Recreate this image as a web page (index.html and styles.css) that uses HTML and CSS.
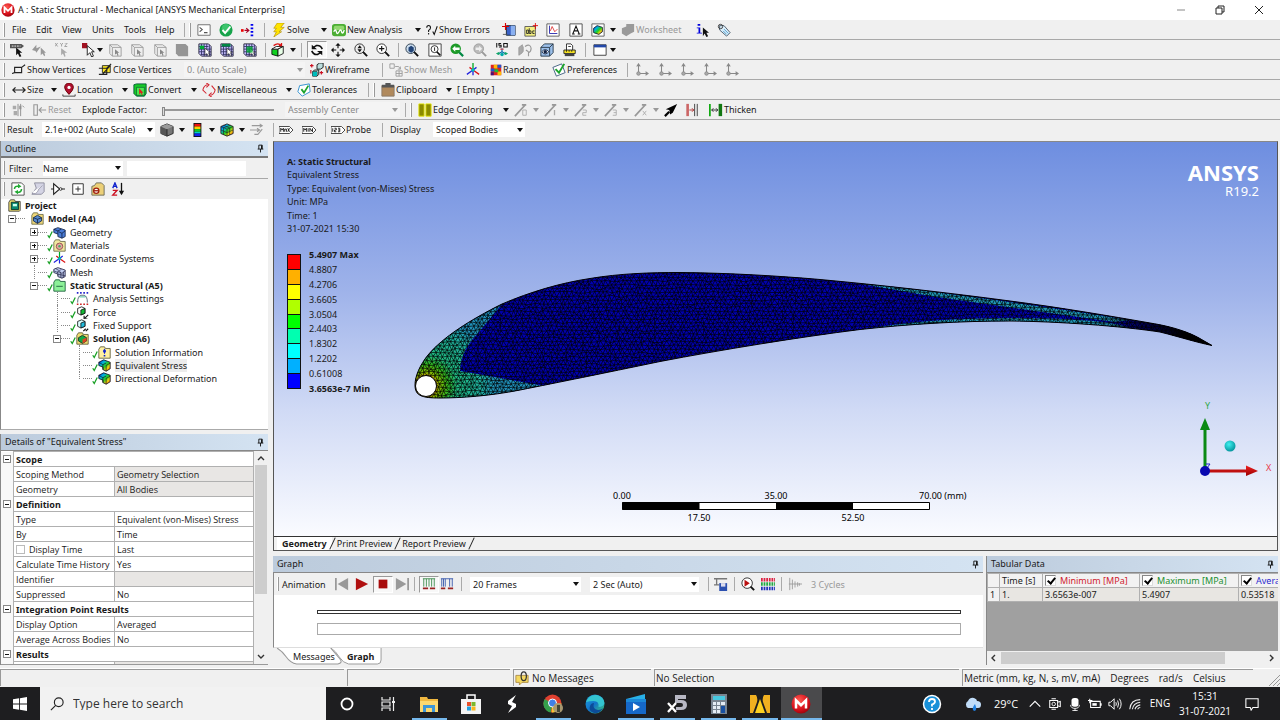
FILE: index.html
```html
<!DOCTYPE html>
<html lang="en">
<head>
<meta charset="utf-8">
<title>A : Static Structural - Mechanical [ANSYS Mechanical Enterprise]</title>
<link rel="stylesheet" href="styles.css">
</head>
<body>
<svg class="sprite" aria-hidden="true">
  <defs>
    <radialGradient id="ball" cx=".4" cy=".3" r=".8"><stop offset="0" stop-color="#ff5a50"/><stop offset=".6" stop-color="#d8101c"/><stop offset="1" stop-color="#8c0008"/></radialGradient>
    <linearGradient id="rain" x2="1" y2="1"><stop offset="0" stop-color="#0020d0"/><stop offset=".3" stop-color="#00b0e0"/><stop offset=".55" stop-color="#20d020"/><stop offset=".75" stop-color="#f0d010"/><stop offset="1" stop-color="#f03010"/></linearGradient>
    <linearGradient id="edgeg" x2="1" y2="1"><stop offset="0" stop-color="#1ba0e0"/><stop offset=".5" stop-color="#1272c8"/><stop offset="1" stop-color="#40d070"/></linearGradient>
  </defs>
  <symbol id="m-logo" viewBox="0 0 16 16"><circle cx="8" cy="8" r="7.6" fill="url(#ball)"/><path d="M4 11.500V5l4 4 4-4v6.500" fill="none" stroke="#fff" stroke-width="2"/></symbol>
  <symbol id="cmd" viewBox="0 0 16 16"><path d="M1 2h14v12H1z" fill="#fff" stroke="#666"/><path d="M3 5l3 2.500-3 2.500M8 11h4" fill="none" stroke="#555" stroke-width="1.200"/></symbol>
  <symbol id="okball" viewBox="0 0 16 16"><circle cx="8" cy="8" r="7.500" fill="#16a34a"/><circle cx="8" cy="6" r="5" fill="#3cc46c"/><path d="M4 8l3 3.500L13 4" fill="none" stroke="#fff" stroke-width="2.200"/></symbol>
  <symbol id="net" viewBox="0 0 16 16"><path d="M0 7h3v3H0z" fill="#e00"/><path d="M4 8.500h5M6 6l3 2.500L6 11" stroke="#a02" fill="none" stroke-width="1.300"/><path d="M11 1h3v2h-3zM11 5h3v2h-3zM11 9h3v2h-3zM11 13h3v2h-3z" fill="#00e"/></symbol>
  <symbol id="bolt" viewBox="0 0 16 16"><path d="M6 0h8l-4 5h4l-6 5h3l-9 6 3-6H2l3-4H2z" fill="#ffe400" stroke="#b08a00" stroke-width=".7"/></symbol>
  <symbol id="newan" viewBox="0 0 16 16"><rect y="1" width="16" height="14" rx="3" fill="#4cae34"/><rect x="2" y="3" width="12" height="5" rx="2" fill="#92d870"/><path d="M2 10q2-4 3 0t3 0 3 0 3-2" fill="none" stroke="#fff" stroke-width="1.500"/></symbol>
  <symbol id="errs" viewBox="0 0 16 16"><path d="M1 5q0-3 2.500-3T6 5q0 2-2.500 3.500v2M3.500 12v2M9 10l2 4 4-11" fill="none" stroke="#111" stroke-width="1.400"/></symbol>
  <symbol id="book" viewBox="0 0 16 16"><path d="M5 3h10v11H5z" fill="#3a62c8" stroke="#123"/><path d="M10 3h5v11h-5z" fill="#8ab0f0"/><path d="M4 0v8M0 4h8" stroke="#d00" stroke-width="1.300"/><path d="M1 13h5" stroke="#555"/></symbol>
  <symbol id="abc" viewBox="0 0 16 16"><path d="M1 4h12v11H1z" fill="#f4f080" stroke="#555"/><path d="M3 8h2v4H3zM6 6v6h2V9H6M12 9h-2v3h2" fill="none" stroke="#222"/><path d="M13 0v7M10 3h6" stroke="#d00"/></symbol>
  <symbol id="chart" viewBox="0 0 16 16"><path d="M1 1h14v14H1z" fill="#fff" stroke="#555"/><path d="M4 3v9h9" fill="none" stroke="#22a"/><path d="M5 9l2-5 3 6 3-3" fill="none" stroke="#d33"/></symbol>
  <symbol id="abox" viewBox="0 0 16 16"><path d="M1 1h14v14H1z" fill="#fff" stroke="#444"/><path d="M4.500 12L8 3.500l3.500 8.500M6 9h4M3.500 12.500h3M10 12.500h3" fill="none" stroke="#111" stroke-width="1.200"/></symbol>
  <symbol id="rainbox" viewBox="0 0 16 16"><path d="M1 1h14v14H1z" fill="#fff" stroke="#555"/><path d="M3 6l4-3 6 2v5l-4 3-6-2z" fill="url(#rain)" stroke="#123"/></symbol>
  <symbol id="wsheet" viewBox="0 0 16 16"><path d="M6 1h9v9l-4 2-5 3-5-3V6l5-2z" fill="#9a9a9a"/></symbol>
  <symbol id="icur" viewBox="0 0 16 16"><path d="M3 1h3v2H3zM2 5h4v6h2v1H2v-1h2V6H2z" fill="#00d"/><path d="M9 5v10l2-3 2 4 2-1-2-4h3z" fill="#111"/></symbol>
  <symbol id="tag" viewBox="0 0 16 16"><path d="M3 3l5 0 7 8-4 4-8-7z" fill="#dceefa" stroke="#456"/><circle cx="4" cy="4" r="2.500" fill="none" stroke="#333"/><path d="M8 7l5 5M7 9l4 4" stroke="#49c"/></symbol>
  <symbol id="lblsel" viewBox="0 0 16 16"><path d="M0 1h13l3 2.500L13 6H0z" fill="#555"/><path d="M2 3.500h10" stroke="#fff" stroke-dasharray="2 1"/><path d="M7 5v9l2-2 2 4 2-1-2-4h3z" fill="#111"/></symbol>
  <symbol id="graysel" viewBox="0 0 16 16"><path d="M0 8l5-6v4l5-2-5 7-1-2z" fill="#999"/><path d="M10 5v9l2-2 2 3 1-1-1-3h2z" fill="#999"/></symbol>
  <symbol id="xyz" viewBox="0 0 16 16"><path d="M0 0l3 4M3 0L0 4M6 0l1.500 2L9 0M7.500 2v2M11 0h3l-3 4h3" fill="none" stroke="#999"/><path d="M7 6v8l2-2 2 4 1-1-1-4h3z" fill="#aaa"/></symbol>
  <symbol id="cursor" viewBox="0 0 16 16"><path d="M0 0h6v6H0z" fill="#a01020"/><path d="M6 3v11l3-3 2 5 2-1-2-5h3z" fill="#fff" stroke="#111"/></symbol>
  <symbol id="cubeg" viewBox="0 0 16 16"><path d="M2 2h9l4 3v10H5l-3-3zM2 2l3 3h10M5 5v10" fill="#eee" stroke="#999"/><path d="M8 7v6l2-1 1 3 1-1-1-3h2z" fill="#888"/></symbol>
  <symbol id="cubes" viewBox="0 0 16 16"><path d="M1 1h11l3 3v11H4l-3-3z" fill="#959595"/></symbol>
  <symbol id="cubem" viewBox="0 0 16 16"><path d="M1 1h11l3 3v11H4l-3-3z" fill="#c8c0ff" stroke="#223"/><path d="M1 4h11M1 7h14M1 10h14M3 13h12M4 1v13M7 1v14M10 1v14M13 2v13" stroke="#336"/><path d="M8 6v8l2-2 2 3 1-1-1-3h2z" fill="#fff" stroke="#111" stroke-width=".6"/></symbol>
  <symbol id="cubem1" viewBox="0 0 16 16"><use href="#cubem"/><path d="M2 3h5v4H2z" fill="#0a3"/></symbol>
  <symbol id="cubem2" viewBox="0 0 16 16"><use href="#cubem"/><path d="M2 1h10v3H2z" fill="#084"/></symbol>
  <symbol id="cubem3" viewBox="0 0 16 16"><use href="#cubem"/><path d="M4 4h7v7H4z" fill="#0a3" fill-opacity=".8"/></symbol>
  <symbol id="cuber" viewBox="0 0 16 16"><path d="M1 7h7v8l-7-2z" fill="#10d020" stroke="#111"/><path d="M1 7l5-3h8l-6 3z" fill="#fff" stroke="#111"/><path d="M8 7l6-3v8l-6 3z" fill="#e8ffe8" stroke="#111"/><path d="M3 3q5-4 9 0M12 0v3H9" fill="none" stroke="#d11" stroke-width="1.500"/></symbol>
  <symbol id="rot" viewBox="0 0 16 16"><path d="M14 7Q12 2 7 3L4 5M2 9q2 5 7 4l3-2" fill="none" stroke="#111" stroke-width="1.800"/><path d="M2 2v5h6zM14 14V9H8z" fill="#111"/></symbol>
  <symbol id="pan" viewBox="0 0 16 16"><path d="M8 2v4M8 10v4M2 8h4M10 8h4" stroke="#111" stroke-width="1.300"/><path d="M8 0l3 3H5zM8 16l3-3H5zM0 8l3-3v6zM16 8l-3-3v6z" fill="#111"/></symbol>
  <symbol id="zoom1" viewBox="0 0 16 16"><circle cx="6.500" cy="6.500" r="5.500" fill="#eee" stroke="#222"/><path d="M10.500 10.500L15 15" stroke="#111" stroke-width="2.200"/><path d="M6.500 2.500L9 6H4zM6.500 10.500L4 7h5z" fill="#111"/></symbol>
  <symbol id="zoom2" viewBox="0 0 16 16"><circle cx="6.500" cy="6.500" r="5.500" fill="#fff" stroke="#222"/><path d="M10.500 10.500L15 15" stroke="#111" stroke-width="2.200"/><path d="M3.500 6.500h6M6.500 3.500v6" stroke="#111" stroke-width="1.300"/></symbol>
  <symbol id="zoom3" viewBox="0 0 16 16"><circle cx="6.500" cy="6.500" r="5.500" fill="#cde" stroke="#234"/><path d="M10.500 10.500L15 15" stroke="#111" stroke-width="2.200"/><path d="M4 5l3-2 3 2v4l-3 2-3-2z" fill="#247"/></symbol>
  <symbol id="zoom4" viewBox="0 0 16 16"><path d="M1 1h14v14H1z" fill="#fff" stroke="#333"/><circle cx="7.500" cy="7" r="4" fill="none" stroke="#222"/><path d="M10 10l4 4" stroke="#111" stroke-width="2"/><path d="M7.500 5v4" stroke="#111"/></symbol>
  <symbol id="zoomg" viewBox="0 0 16 16"><circle cx="6.500" cy="6.500" r="6" fill="#1c9a28"/><path d="M10.500 10.500L15 15" stroke="#084" stroke-width="2.500"/><path d="M6 3L2.500 6.500 6 10V8h5V5H6z" fill="#fff"/></symbol>
  <symbol id="zoomx" viewBox="0 0 16 16"><circle cx="6.500" cy="6.500" r="5.500" fill="#bbb" stroke="#999"/><path d="M10.500 10.500L15 15" stroke="#999" stroke-width="2.200"/><path d="M7 3l3.500 3.500L7 10V8H3V5h4z" fill="#eee"/></symbol>
  <symbol id="iso" viewBox="0 0 16 16"><path d="M2 0v5M7 .500H4.500v2H7v2H4.500M10 .500h4v4h-4z" fill="none" stroke="#111" stroke-width="1.200"/><path d="M8 6v4l-5 3M8 10l5 3" fill="none" stroke="#06a" stroke-width="1.300"/><path d="M1 12l4-2v4zM15 12l-4-2v4z" fill="#1a6"/><circle cx="8" cy="13" r="2" fill="#0aa"/><path d="M6 7h4" stroke="#d22"/></symbol>
  <symbol id="lookat" viewBox="0 0 16 16"><path d="M1 5l4-3v9l-4 3zM6 4v6" fill="#aaa" stroke="#999"/><path d="M8 4q6-4 7 2 0 4-3 5v4M9 8l3 2" fill="none" stroke="#999" stroke-width="1.300"/></symbol>
  <symbol id="eye" viewBox="0 0 16 16"><path d="M1 5l4-4h10v10l-4 4H1zM1 5h10v10M11 5l4-4" fill="#9cc0ea" stroke="#234"/><path d="M2 10q4-5 8 0-4 5-8 0z" fill="#fff" stroke="#124"/><circle cx="6" cy="10" r="2" fill="#124"/></symbol>
  <symbol id="ruler" viewBox="0 0 16 16"><path d="M4 8V1h5l2 2v5M6 4h3" fill="#fff" stroke="#222"/><path d="M1 8h13v4H1z" fill="#f4e020" stroke="#222"/><path d="M2 12h11v3H2z" fill="#444"/><path d="M4 8v2M7 8v2M10 8v2" stroke="#222"/></symbol>
  <symbol id="win" viewBox="0 0 16 16"><path d="M1 2h14v12H1z" fill="#fff" stroke="#333"/><path d="M1 2h14v3H1z" fill="#2348a8"/></symbol>
  <symbol id="sv" viewBox="0 0 16 16"><path d="M3 5h8v6H3zM0 12l3-1M11 5l4-3" fill="none" stroke="#222" stroke-width="1.300"/></symbol>
  <symbol id="cv" viewBox="0 0 16 16"><path d="M5 3h9v8H5z" fill="#ffe820" stroke="#222"/><path d="M1 6h9v7H1M10 6l5-5M5 13L14 3" fill="none" stroke="#222" stroke-width="1.300"/></symbol>
  <symbol id="wire" viewBox="0 0 16 16"><path d="M8 2l3-2h4v5l-3 2H8zM3 10h5v5H3zM3 10l2-2h5v5l-2 2" fill="#bdd" stroke="#111"/><path d="M3 10h5v5H3z" fill="#0bb"/><path d="M0 3h4M2 1v4M1 8v4M13 9v4M11 11h4" stroke="#c12" stroke-width="1.300"/></symbol>
  <symbol id="smesh" viewBox="0 0 16 16"><path d="M1 1h5v5H1zM8 9h7v6H8zM8 12h7M11.500 9v6M7 4h4l2 3M13 4v3h-3" fill="none" stroke="#999"/></symbol>
  <symbol id="triad" viewBox="0 0 16 16"><path d="M8 8V0" stroke="#0a2" stroke-width="1.500"/><path d="M8 8l7 5M4 5l4 3" stroke="#d11" stroke-width="1.500"/><path d="M8 8l-7 5M8 8l4-3M8 8v6" stroke="#22d" stroke-width="1.500"/><circle cx="8" cy="8" r="2" fill="#0bb"/></symbol>
  <symbol id="random" viewBox="0 0 16 16"><path d="M1 1h14v14H1z" fill="#d22"/><path d="M5 1h5v5H5zM10 10h5v5h-5z" fill="#fb0"/><path d="M1 6h5v4H1zM10 1h5v4h-5z" fill="#25c"/><path d="M6 7h5v4H6z" fill="#2b3"/><path d="M1 11h4v4H1z" fill="#417"/></symbol>
  <symbol id="pref" viewBox="0 0 16 16"><path d="M1 5L11 1l4 10-10 4z" fill="#fff" stroke="#357"/><path d="M4 7l4 4L14 1" fill="none" stroke="#1ca42c" stroke-width="2.200"/></symbol>
  <symbol id="axis" viewBox="0 0 16 16"><path d="M4 12V2M2 4l2-3 2 3M4 12h11M12 10l3 2-3 2" fill="none" stroke="#888" stroke-width="1.200"/><circle cx="4" cy="12" r="2" fill="#aaa" stroke="#888"/></symbol>
  <symbol id="size" viewBox="0 0 16 16"><path d="M1 8h14M4 5L1 8l3 3M12 5l3 3-3 3" fill="none" stroke="#222" stroke-width="1.400"/></symbol>
  <symbol id="loc" viewBox="0 0 16 16"><path d="M8 13Q3 8 3 5a5 5 0 0110 0q0 3-5 8z" fill="#b01030" stroke="#600"/><circle cx="8" cy="5" r="1.800" fill="#fff"/><path d="M1 13v2h14v-2" fill="none" stroke="#333"/></symbol>
  <symbol id="conv" viewBox="0 0 16 16"><path d="M1 2l3-1h11v11l-2 3H4l-3-3z" fill="#18c828" stroke="#053"/><path d="M4 5h9v9H4z" fill="#4ce850" stroke="#053" stroke-width=".7"/><path d="M7 6v7l2-2 1 3 1-1-1-2h2z" fill="#d22"/></symbol>
  <symbol id="misc" viewBox="0 0 16 16"><path d="M6 2Q2 3 1 8l4 4M10 14q4-1 5-6l-4-5M5 5L8 2 5 0M11 11l-3 3 3 2" fill="none" stroke="#d2232e" stroke-width="1.200"/></symbol>
  <symbol id="tol" viewBox="0 0 16 16"><path d="M3 3L14 1l1 9-9 5-5-5z" fill="#fff" stroke="#28c"/><path d="M5 7l3 4 5-8" fill="none" stroke="#1ca42c" stroke-width="2"/></symbol>
  <symbol id="clip" viewBox="0 0 16 16"><path d="M1 3h14v12H1z" fill="#b0895c" stroke="#876"/><path d="M1 2h14v3H1zM5 0h6v3H5z" fill="#555"/></symbol>
  <symbol id="expl" viewBox="0 0 16 16"><path d="M2 3h4v4H2zM3 9h4v5H3zM9 3h3v4H9z" fill="#aaa"/><path d="M8 1v14M11 1v14M13 3l2 2" stroke="#888"/></symbol>
  <symbol id="reset" viewBox="0 0 16 16"><path d="M1 2h4v12H1zM7 8h8M10 5L7 8l3 3" fill="none" stroke="#999" stroke-width="1.300"/></symbol>
  <symbol id="edgec" viewBox="0 0 16 16"><path d="M1 1h6v14H1zM9 1h6v14H9z" fill="#8a8a00" stroke="#e6e600"/></symbol>
  <symbol id="edgen" viewBox="0 0 16 16"><path d="M1 15L13 2M9 2h5" stroke="#999" stroke-width="2"/><path d="M10 8h4v6h-4z" fill="none" stroke="#aaa"/></symbol>
  <symbol id="edge1" viewBox="0 0 16 16"><path d="M1 15L13 2M9 2h5" stroke="#999" stroke-width="2"/><path d="M12 8v6" stroke="#aaa" stroke-width="1.500"/></symbol>
  <symbol id="edge2" viewBox="0 0 16 16"><path d="M1 15L13 2M9 2h5" stroke="#999" stroke-width="2"/><path d="M10 8h4v3h-4v3h4" fill="none" stroke="#aaa"/></symbol>
  <symbol id="edge3" viewBox="0 0 16 16"><path d="M1 15L13 2M9 2h5" stroke="#999" stroke-width="2"/><path d="M10 8h4v6h-4M11 11h3" fill="none" stroke="#aaa"/></symbol>
  <symbol id="edgex" viewBox="0 0 16 16"><path d="M1 15L13 2M9 2h5" stroke="#999" stroke-width="2"/><path d="M10 9l4 5M14 9l-4 5" fill="none" stroke="#aaa"/></symbol>
  <symbol id="darrow" viewBox="0 0 16 16"><path d="M1 15l5-5" stroke="#000" stroke-width="2.500"/><path d="M15 1L2 7l4 1 1 5 3-2z" fill="#000"/></symbol>
  <symbol id="ticks" viewBox="0 0 16 16"><path d="M3 1v14" stroke="#c66" stroke-width="3"/><path d="M14 1v14M11 1v14" stroke="#333"/><path d="M5 8h5M8 6l2 2-2 2" fill="none" stroke="#a22"/></symbol>
  <symbol id="thick" viewBox="0 0 16 16"><path d="M1 1v14" stroke="#1a1" stroke-width="2"/><path d="M13 1v14" stroke="#171" stroke-width="4"/><path d="M3 8h7M5 6L3 8l2 2M8 6l2 2-2 2" fill="none" stroke="#222"/></symbol>
  <symbol id="solid" viewBox="0 0 16 16"><path d="M1 4l7-3 7 3v8l-7 3-7-3z" fill="#777" stroke="#222"/><path d="M1 4l7 3v8l-7-3z" fill="#555"/><path d="M1 4l7-3 7 3-7 3z" fill="#999"/><path d="M8 7v8" stroke="#222"/></symbol>
  <symbol id="strip" viewBox="0 0 16 16"><path d="M4 0h9v16H4z" fill="#111"/><path d="M5 1h7v3H5z" fill="#e11"/><path d="M5 4h7v3H5z" fill="#fc0"/><path d="M5 7h7v3H5z" fill="#1c2"/><path d="M5 10h7v2H5z" fill="#0cc"/><path d="M5 12h7v3H5z" fill="#12e"/></symbol>
  <symbol id="rcube" viewBox="0 0 16 16"><path d="M1 4l7-3 7 3v8l-7 3-7-3z" fill="url(#rain)" stroke="#222"/><path d="M1 4l7 3v8M8 7l7-3M4 2.500l7 3.200v8M12 2.500L4 5.500v8M1 8l7 3 7-3" fill="none" stroke="#222" stroke-width=".7"/></symbol>
  <symbol id="vecs" viewBox="0 0 16 16"><path d="M2 3h12M11 1l3 2-3 2M0 8h10M8 6l3 2-3 2M5 13h4l5-6" fill="none" stroke="#999" stroke-width="1.200"/></symbol>
  <symbol id="max" viewBox="0 0 16 16"><path d="M0 4h12l4 4-4 4H0z" fill="#fff" stroke="#333"/><path d="M2 10V6l1.500 2L5 6v4M6.500 10V7h2v3M10 6l2 4M12 6l-2 4" fill="none" stroke="#111"/></symbol>
  <symbol id="min" viewBox="0 0 16 16"><path d="M0 4h12l4 4-4 4H0z" fill="#fff" stroke="#333"/><path d="M2 10V6l1.500 2L5 6v4M7 6v4M9 10V6l3 4V6" fill="none" stroke="#111"/></symbol>
  <symbol id="probe" viewBox="0 0 16 16"><path d="M0 4h12l4 4-4 4H0z" fill="#fff" stroke="#333"/><path d="M2 6v4M4 6h2v2H4v2h2M8 6h2v4H8M8 8h2" fill="none" stroke="#111"/></symbol>
  <symbol id="pin" viewBox="0 0 16 16"><path d="M5 2h6v7M5 2v7M3 9h10M8 9v6" fill="none" stroke="#111" stroke-width="1.600"/><path d="M9 2h2v7H9z" fill="#111"/></symbol>
  <symbol id="refresh" viewBox="0 0 16 16"><path d="M1 1h11l3 3v11H1z" fill="#fff" stroke="#444"/><path d="M4 8q0-4 5-3M12 8q0 4-5 4" fill="none" stroke="#2a3" stroke-width="1.800"/><path d="M8 2l4 3-4 2zM8 14l-4-3 4-2z" fill="#2a3"/></symbol>
  <symbol id="erase" viewBox="0 0 16 16"><path d="M4 1h11v10l-3 3H1l5-7z" fill="#d4d4e4" stroke="#889"/><path d="M1 12q5 4 8-4l4-4" fill="#fff" stroke="#99a"/></symbol>
  <symbol id="gate" viewBox="0 0 16 16"><path d="M3 2v12l7-6zM0 8h3M10 8h6" fill="#fff" stroke="#222" stroke-width="1.200"/><circle cx="11" cy="8" r="1.500" fill="#fff" stroke="#222"/></symbol>
  <symbol id="plusbox" viewBox="0 0 16 16"><path d="M2 2h12v12H2zM5 8h6M8 5v6" fill="#fff" stroke="#222"/></symbol>
  <symbol id="fold" viewBox="0 0 16 16"><path d="M1 5l3-1 2-3h6l3 3v11H1z" fill="#ecd078" stroke="#665"/><circle cx="6" cy="10" r="3" fill="#fff" stroke="#a02010" stroke-width="1.500"/><path d="M3 10h6" stroke="#a02010" stroke-width="1.500"/></symbol>
  <symbol id="az" viewBox="0 0 16 16"><path d="M2 7l2.500-6L7 7M3 5h3" fill="none" stroke="#12c" stroke-width="1.500"/><path d="M2 9.500h5L2 15h5" fill="none" stroke="#c12" stroke-width="1.500"/><path d="M12 1v12" stroke="#111" stroke-width="1.500"/><path d="M9 10l3 5 3-5z" fill="#111"/></symbol>
  <symbol id="proj" viewBox="0 0 16 16"><path d="M1 4l2-3h5l1 2h6v11l-1 1H1z" fill="#f0e070" stroke="#333"/><path d="M4 4h9v9H4z" fill="#0a8a70" stroke="#022"/><path d="M6 6h5v3H6z" fill="#cfe"/></symbol>
  <symbol id="model" viewBox="0 0 16 16"><path d="M1 4l2-3h5l1 2h6v12H1z" fill="#f0d878" stroke="#664"/><path d="M3 7l5-3 5 3v4l-5 3-5-3z" fill="#58c" stroke="#124"/><path d="M3 7l5 2 5-2M8 9v5" stroke="#124" fill="none"/></symbol>
  <symbol id="geom" viewBox="0 0 16 16"><path d="M1 4l5-2 9 3v8l-4 2-5-2v-3l-5-2z" fill="#4a7cd8" stroke="#124"/><path d="M1 4l5 2 4-2M6 6v4M7 7l4 2 4-3M11 9v6" fill="none" stroke="#124"/></symbol>
  <symbol id="mat" viewBox="0 0 16 16"><path d="M1 4l2-3h5l1 2h6v12H1z" fill="#f0e8a0" stroke="#664"/><circle cx="8" cy="9" r="4" fill="#e8a8a0" stroke="#844"/><circle cx="8" cy="9" r="1.500" fill="#4a6"/></symbol>
  <symbol id="mesh" viewBox="0 0 16 16"><path d="M1 4l5-2 9 3v8l-4 2-5-2v-3l-5-2z" fill="#c0ccf0" stroke="#224"/><path d="M1 6l5 2 4-4M3 3l5 3M6 6v6M7 7l4 2 4-3M11 9v6M9 7v7M13 7v7M6 10l9 2" fill="none" stroke="#224" stroke-width=".8"/></symbol>
  <symbol id="statics" viewBox="0 0 16 16"><path d="M1 4l2-3h5l1 2h6v12H1z" fill="#8cf098" stroke="#153"/><path d="M4 9h8" stroke="#153"/></symbol>
  <symbol id="aset" viewBox="0 0 16 16"><path d="M1 1h14" stroke="#22c" stroke-width="2" stroke-dasharray="2 2"/><path d="M1 15h14" stroke="#c22" stroke-width="2" stroke-dasharray="2 2"/><path d="M2 13q0-8 4-9h4q4 1 4 9" fill="none" stroke="#456"/><path d="M4 6h8" stroke="#2a8"/></symbol>
  <symbol id="force" viewBox="0 0 16 16"><path d="M2 3l5-2 4 2v6l-5 2-4-2z" fill="#fff" stroke="#111"/><path d="M6 5l5-2v6l-5 2z" fill="#1b3" stroke="#111"/><path d="M15 11l-4 4M10 12v4h4" fill="none" stroke="#111" stroke-width="1.400"/></symbol>
  <symbol id="fixed" viewBox="0 0 16 16"><path d="M2 3l5-2 4 2v6l-5 2-4-2z" fill="#dff" stroke="#111"/><path d="M6 5l5-2v6l-5 2z" fill="#2bd" stroke="#111"/><path d="M9 15l3-3M12 15l3-3" stroke="#111" stroke-width="1.400"/></symbol>
  <symbol id="soln" viewBox="0 0 16 16"><path d="M1 4l2-3h5l1 2h6v12H1z" fill="#f0dc70" stroke="#553"/><path d="M3 7l5-3 5 3v4l-5 3-5-3z" fill="#1a4" stroke="#122"/><path d="M8 9l5-2v4l-5 3z" fill="#d42"/></symbol>
  <symbol id="sinfo" viewBox="0 0 16 16"><path d="M1 4l2-3h5l1 2h6v12H1z" fill="#fff0a0" stroke="#553"/><path d="M8 3l2 3-2 4-2-4zM7 11h2v2H7z" fill="#12c"/></symbol>
  <symbol id="result" viewBox="0 0 16 16"><path d="M1 4l6-3 8 3v8l-5 3-4-2v-3l-5-2z" fill="url(#rain)" stroke="#112"/><path d="M1 4l5 3v6M6 7l4-2M10 8v7M10 8l5-3" fill="none" stroke="#112" stroke-width=".8"/></symbol>
  <symbol id="check" viewBox="0 0 8 10"><path d="M1 6l2 3 4-8" fill="none" stroke="#18a024" stroke-width="1.700"/></symbol>
  <symbol id="tstart" viewBox="0 0 16 16"><path d="M1 1v14" stroke="#999" stroke-width="2"/><path d="M15 1v14L3 8z" fill="#999"/></symbol>
  <symbol id="tplay" viewBox="0 0 16 16"><path d="M1 1l14 7-14 7z" fill="#b01010"/></symbol>
  <symbol id="tstop" viewBox="0 0 16 16"><path d="M3 3h10v10H3z" fill="#a80c0c"/></symbol>
  <symbol id="tend" viewBox="0 0 16 16"><path d="M15 1v14" stroke="#999" stroke-width="2"/><path d="M1 1v14l12-7z" fill="#999"/></symbol>
  <symbol id="dist1" viewBox="0 0 16 16"><path d="M1 2h14M2 2v9M5 2v9M8 2v9M11 2v9M14 2v9" stroke="#3a8a4a" fill="none"/><path d="M1 13h6M9 13h6" stroke="#922" stroke-width="2"/></symbol>
  <symbol id="dist2" viewBox="0 0 16 16"><path d="M1 2h14M2 2v9M4 2v9M6 2v9M11 2v9M14 2v9" stroke="#35a" fill="none"/><path d="M1 13h5M9 13h6" stroke="#922" stroke-width="2"/></symbol>
  <symbol id="save" viewBox="0 0 16 16"><path d="M0 2h15M3 2v7M0 9h6" stroke="#777" stroke-width="1.500"/><path d="M6 7h9v9H6z" fill="#2c50b0"/><path d="M8 7h5v4H8z" fill="#dde"/></symbol>
  <symbol id="zplay" viewBox="0 0 16 16"><circle cx="7" cy="7" r="6" fill="#fff" stroke="#222"/><path d="M11 11l4 4" stroke="#111" stroke-width="2.200"/><path d="M4 3l6 4-6 4z" fill="#b11"/></symbol>
  <symbol id="bars" viewBox="0 0 16 16"><path d="M0 3h16" stroke="#d24" stroke-width="4" stroke-dasharray="2 1"/><path d="M0 8h16" stroke="#2a4" stroke-width="4" stroke-dasharray="2 1"/><path d="M0 13h16" stroke="#23b" stroke-width="4" stroke-dasharray="2 1"/></symbol>
  <symbol id="cyc" viewBox="0 0 16 16"><path d="M2 1v14M5 3v11M8 5v7M11 6v5M13 7v3M1 8h15" stroke="#999" fill="none"/></symbol>
  <symbol id="msg" viewBox="0 0 16 16"><path d="M1 5h14v8H8l-3 3v-3H1z" fill="#f4d860" stroke="#a84"/><ellipse cx="10" cy="6" rx="3" ry="5" fill="none" stroke="#333" stroke-width="1.400"/></symbol>
  <symbol id="winlogo" viewBox="0 0 16 16"><path d="M0 2.500l7-1v6H0zM8 1.300L16 0v7.500H8zM0 8.500h7v6l-7-1zM8 8.500h8V16l-8-1.300z" fill="#fff"/></symbol>
  <symbol id="search" viewBox="0 0 16 16"><circle cx="10" cy="6" r="5" fill="none" stroke="#222" stroke-width="1.300"/><path d="M6.500 9.500L1 15" stroke="#222" stroke-width="1.300"/></symbol>
  <symbol id="cortana" viewBox="0 0 20 20"><circle cx="10" cy="10" r="5.500" fill="none" stroke="#fff" stroke-width="1.800"/></symbol>
  <symbol id="tview" viewBox="0 0 20 20"><path d="M4 3v3h8V3M4 17v-3h8v3M4 8h8v4H4zM15.500 3v14" fill="none" stroke="#eee" stroke-width="1.200"/><path d="M14 7h3v2h-3z" fill="#eee"/></symbol>
  <symbol id="files" viewBox="0 0 20 20"><path d="M1 3h7l1 2h10v13H1z" fill="#f0b840"/><path d="M1 7h18v11H1z" fill="#fcd870"/><path d="M4 11h12v7h-3v-4H7v4H4z" fill="#3c96d8"/></symbol>
  <symbol id="store" viewBox="0 0 20 20"><path d="M6 5V1h8v4" fill="none" stroke="#fff" stroke-width="1.500"/><path d="M0 5h20v15H0z" fill="#f4f4f4"/><path d="M6 8h4v4H6z" fill="#e8502a"/><path d="M10.500 8h4v4h-4z" fill="#7cb82c"/><path d="M6 12.500h4v4H6z" fill="#20a0e0"/><path d="M10.500 12.500h4v4h-4z" fill="#f8b820"/></symbol>
  <symbol id="sbolt" viewBox="0 0 20 20"><path d="M14 1L6 7v3l4 2-4 7 8-6v-3l-4-2z" fill="#fff"/></symbol>
  <symbol id="chrome" viewBox="0 0 20 20"><circle cx="9.500" cy="9.500" r="9" fill="#e04030"/><path d="M9.500 9.500L1.700 5a9 9 0 006 13.500z" fill="#34a04c"/><path d="M9.500 9.500h9a9 9 0 01-10 9z" fill="#f8c830"/><circle cx="9.500" cy="9" r="4" fill="#4080e8" stroke="#fff"/><circle cx="15" cy="14" r="5" fill="#a89870"/><path d="M14 11h3v7h-3z" fill="#443"/></symbol>
  <symbol id="edge" viewBox="0 0 20 20"><circle cx="10" cy="10" r="9.500" fill="url(#edgeg)"/><path d="M1 8Q4 0 12 1q7 2 7.500 8-1 4-6 4 1-6-5-6-4 0-7.500 1z" fill="#34c4d0"/><path d="M9 9q-2 6 4 7 3 0 5-2-3 6-9 5-6-2-4-7 1-3 4-3z" fill="#0c4c98"/></symbol>
  <symbol id="movies" viewBox="0 0 20 20"><path d="M0 5l19-5v5z" fill="#28b0e8"/><path d="M0 5h20v15H0z" fill="#1668c8"/><path d="M0 5h20v3H0z" fill="#1c88d8"/><path d="M7 9l7 4-7 4z" fill="#fff"/></symbol>
  <symbol id="x5" viewBox="0 0 20 20"><path d="M19 1H8v8h6q2 0 2 2t-2 2H9v3h5q6 0 6-5t-6-5h-3V5h8z" fill="#b8b8c4"/><path d="M1 9l8 9M9 9L1 18" stroke="#fff" stroke-width="2.300"/></symbol>
  <symbol id="calc" viewBox="0 0 20 20"><path d="M2 0h16v20H2z" fill="#788490"/><path d="M4 2h12v4H4z" fill="#48c8e0"/><path d="M4 8h3v3H4zM8 8h3v3H8zM12 8h4v3h-4zM4 12h3v3H4zM8 12h3v3H8zM4 16h3v3H4zM8 16h3v3H8z" fill="#e4ecf4"/><path d="M12 12h4v7h-4z" fill="#1850a0"/></symbol>
  <symbol id="ansysl" viewBox="0 0 20 20"><path d="M0 1h6q2 3 1 7L3 19H0zM20 1h-6q-2 3-1 7l4 11h3z" fill="#f0b020"/><path d="M10 5l5 14H5z" fill="#fcd020"/></symbol>
  <symbol id="help" viewBox="0 0 20 20"><circle cx="10" cy="10" r="8.500" fill="#1890d8" stroke="#fff" stroke-width="1.500"/><path d="M7 8q0-3 3-3t3 2.500q0 2-3 3v2M10 14v2" fill="none" stroke="#fff" stroke-width="1.800"/></symbol>
  <symbol id="cloud" viewBox="0 0 20 20"><path d="M5 14a4 4 0 010-7q2-4 6-3 3 1 3 3 4 0 4 3.500t-3 3.500z" fill="#c0dcf8"/><path d="M12 10q-4 5-1 7 4 0 1-7z" fill="#2080e0"/></symbol>
  <symbol id="up" viewBox="0 0 16 16"><path d="M2 11l6-6 6 6" fill="none" stroke="#fff" stroke-width="1.300"/></symbol>
  <symbol id="cam" viewBox="0 0 16 16"><path d="M2 4h9v8H2zM11 6l3-1v6l-3-1M4 2h5M4 14h5" fill="none" stroke="#fff" stroke-width="1.200"/><circle cx="6.500" cy="8" r="2" fill="none" stroke="#fff"/></symbol>
  <symbol id="mic" viewBox="0 0 16 16"><rect x="4" y="1" width="8" height="10" rx="3" fill="#fff"/><path d="M3 9q0 4 5 4t5-4M8 13v3M5 15.500h6" fill="none" stroke="#fff"/></symbol>
  <symbol id="batt" viewBox="0 0 16 16"><path d="M3 5h11v7H3zM15 7v3M2 2v5M0 4h5" fill="none" stroke="#fff" stroke-width="1.200"/><path d="M5 7h5v3H5z" fill="#fff"/></symbol>
  <symbol id="vol" viewBox="0 0 16 16"><path d="M1 6h2l4-4v12l-4-4H1zM9 6q1 2 0 4M11 4q2 4 0 8M13 2q4 6 0 12" fill="none" stroke="#fff" stroke-width="1.100"/></symbol>
  <symbol id="wifi" viewBox="0 0 16 16"><path d="M2 14Q3 3 14 3M5 14q1-7 9-8M8 14q1-4 6-5M11 14q1-2 3-2" fill="none" stroke="#eee" stroke-width="1.200"/></symbol>
  <symbol id="note" viewBox="0 0 16 16"><path d="M1 2h14v10H9l-2 3-1-3H1z" fill="none" stroke="#fff" stroke-width="1.200"/></symbol>
  <symbol id="chl" viewBox="0 0 8 8"><path d="M5 1L2 4l3 3" fill="none" stroke="#333" stroke-width="1.400"/></symbol>
  <symbol id="chr" viewBox="0 0 8 8"><path d="M3 1l3 3-3 3" fill="none" stroke="#333" stroke-width="1.400"/></symbol>
  <symbol id="chu" viewBox="0 0 8 8"><path d="M1 6l3-3 3 3" fill="none" stroke="#333" stroke-width="1.400"/></symbol>
  <symbol id="chd" viewBox="0 0 8 8"><path d="M1 2l3 3 3-3" fill="none" stroke="#333" stroke-width="1.400"/></symbol>
</svg>

<header class="titlebar">
  <svg class="ic"><use href="#m-logo"/></svg>
  <h1>A : Static Structural - Mechanical [ANSYS Mechanical Enterprise]</h1>
  <div class="winbtns">
    <button aria-label="Minimize"><svg viewBox="0 0 10 10"><path d="M1 5h8" stroke="#888"/></svg></button>
    <button aria-label="Restore"><svg viewBox="0 0 10 10"><path d="M1 3h6v6H1zM3 3V1h6v6H7" fill="none" stroke="#222"/></svg></button>
    <button aria-label="Close"><svg viewBox="0 0 10 10"><path d="M1 1l8 8M9 1L1 9" stroke="#222"/></svg></button>
  </div>
</header>

<nav class="bar bar-menu">
  <i class="grip"></i><button>File</button><button>Edit</button><button>View</button><button>Units</button><button>Tools</button><button>Help</button><i class="sep"></i><i class="grip"></i>
  <button aria-label="Command"><svg class="ic"><use href="#cmd"/></svg></button>
  <button aria-label="Status"><svg class="ic"><use href="#okball"/></svg></button>
  <button aria-label="Connections"><svg class="ic"><use href="#net"/></svg></button><i class="sep"></i>
  <button class="drop"><svg class="ic"><use href="#bolt"/></svg>Solve</button>
  <button class="drop"><svg class="ic"><use href="#newan"/></svg>New Analysis</button>
  <button><svg class="ic sm"><use href="#errs"/></svg>Show Errors</button>
  <button aria-label="Section"><svg class="ic"><use href="#book"/></svg></button>
  <button aria-label="Annotation"><svg class="ic"><use href="#abc"/></svg></button>
  <button aria-label="Chart"><svg class="ic"><use href="#chart"/></svg></button>
  <button aria-label="Comment"><svg class="ic"><use href="#abox"/></svg></button>
  <button class="drop" aria-label="Figure"><svg class="ic"><use href="#rainbox"/></svg></button>
  <button disabled><svg class="ic"><use href="#wsheet"/></svg>Worksheet</button>
  <button aria-label="Selection info"><svg class="ic"><use href="#icur"/></svg></button>
  <button aria-label="Tag"><svg class="ic"><use href="#tag"/></svg></button>
</nav>

<nav class="bar bar-view">
  <i class="grip"></i>
  <button aria-label="Label"><svg class="ic"><use href="#lblsel"/></svg></button>
  <button aria-label="Direction"><svg class="ic"><use href="#graysel"/></svg></button>
  <button aria-label="Coordinates"><svg class="ic"><use href="#xyz"/></svg></button>
  <button class="drop" aria-label="Select mode"><svg class="ic"><use href="#cursor"/></svg></button>
  <button aria-label="Vertex"><svg class="ic"><use href="#cubeg"/></svg></button>
  <button aria-label="Edge"><svg class="ic"><use href="#cubeg"/></svg></button>
  <button aria-label="Face"><svg class="ic"><use href="#cubeg"/></svg></button>
  <button aria-label="Body"><svg class="ic"><use href="#cubes"/></svg></button>
  <button aria-label="Node"><svg class="ic"><use href="#cubem1"/></svg></button>
  <button aria-label="Element face"><svg class="ic"><use href="#cubem2"/></svg></button>
  <button aria-label="Element"><svg class="ic"><use href="#cubem3"/></svg></button><i class="sep"></i>
  <button class="drop" aria-label="Extend"><svg class="ic"><use href="#cuber"/></svg></button><i class="sep"></i>
  <button class="on" aria-label="Rotate"><svg class="ic"><use href="#rot"/></svg></button>
  <button aria-label="Pan"><svg class="ic"><use href="#pan"/></svg></button>
  <button aria-label="Zoom"><svg class="ic"><use href="#zoom1"/></svg></button>
  <button aria-label="Box zoom"><svg class="ic"><use href="#zoom2"/></svg></button><i class="sep"></i>
  <button aria-label="Fit"><svg class="ic"><use href="#zoom3"/></svg></button>
  <button aria-label="Magnifier"><svg class="ic"><use href="#zoom4"/></svg></button>
  <button aria-label="Previous view"><svg class="ic"><use href="#zoomg"/></svg></button>
  <button aria-label="Next view"><svg class="ic"><use href="#zoomx"/></svg></button>
  <button aria-label="Isometric"><svg class="ic"><use href="#iso"/></svg></button>
  <button aria-label="Look at"><svg class="ic"><use href="#lookat"/></svg></button>
  <button aria-label="Manage views"><svg class="ic"><use href="#eye"/></svg></button>
  <button aria-label="Rescale"><svg class="ic"><use href="#ruler"/></svg></button><i class="sep"></i>
  <button class="drop" aria-label="Viewports"><svg class="ic"><use href="#win"/></svg></button>
</nav>

<nav class="bar bar-vertex">
  <i class="grip"></i>
  <button><svg class="ic"><use href="#sv"/></svg>Show Vertices</button>
  <button><svg class="ic"><use href="#cv"/></svg>Close Vertices</button>
  <span class="combo off"><select aria-label="Vertex scale" disabled><option>0. (Auto Scale)</option></select></span>
  <button><svg class="ic"><use href="#wire"/></svg>Wireframe</button><i class="sep"></i>
  <button disabled><svg class="ic"><use href="#smesh"/></svg>Show Mesh</button>
  <button aria-label="Axes"><svg class="ic"><use href="#triad"/></svg></button>
  <button><svg class="ic sm"><use href="#random"/></svg>Random</button>
  <button><svg class="ic"><use href="#pref"/></svg>Preferences</button><i class="sep"></i>
  <button aria-label="Axis 1"><svg class="ic"><use href="#axis"/></svg></button>
  <button aria-label="Axis 2"><svg class="ic"><use href="#axis"/></svg></button>
  <button aria-label="Axis 3"><svg class="ic"><use href="#axis"/></svg></button>
  <button aria-label="Axis 4"><svg class="ic"><use href="#axis"/></svg></button>
  <button aria-label="Axis 5"><svg class="ic"><use href="#axis"/></svg></button>
</nav>

<nav class="bar bar-size">
  <i class="grip"></i>
  <button class="drop"><svg class="ic"><use href="#size"/></svg>Size</button>
  <button class="drop"><svg class="ic"><use href="#loc"/></svg>Location</button>
  <button class="drop"><svg class="ic"><use href="#conv"/></svg>Convert</button>
  <button class="drop"><svg class="ic"><use href="#misc"/></svg>Miscellaneous</button>
  <button><svg class="ic"><use href="#tol"/></svg>Tolerances</button><i class="sep"></i><i class="grip"></i>
  <button class="drop"><svg class="ic"><use href="#clip"/></svg>Clipboard</button>
  <span>[ Empty ]</span>
</nav>

<nav class="bar bar-explode">
  <i class="grip"></i>
  <button aria-label="Explode"><svg class="ic"><use href="#expl"/></svg></button>
  <button disabled><svg class="ic"><use href="#reset"/></svg>Reset</button>
  <label for="explode">Explode Factor:</label>
  <input id="explode" type="range" value="0">
  <span class="combo off"><select aria-label="Explode center" disabled><option>Assembly Center</option></select></span><i class="sep"></i><i class="grip"></i>
  <button class="drop"><svg class="ic"><use href="#edgec"/></svg>Edge Coloring</button>
  <button class="drop dim" aria-label="Edge 0"><svg class="ic"><use href="#edgen"/></svg></button>
  <button class="drop dim" aria-label="Edge 1"><svg class="ic"><use href="#edge1"/></svg></button>
  <button class="drop dim" aria-label="Edge 2"><svg class="ic"><use href="#edge2"/></svg></button>
  <button class="drop dim" aria-label="Edge 3"><svg class="ic"><use href="#edge3"/></svg></button>
  <button class="drop dim" aria-label="Edge X"><svg class="ic"><use href="#edgex"/></svg></button>
  <button aria-label="Edge direction"><svg class="ic"><use href="#darrow"/></svg></button>
  <button aria-label="Mesh connection"><svg class="ic"><use href="#ticks"/></svg></button>
  <button><svg class="ic"><use href="#thick"/></svg>Thicken</button>
</nav>

<nav class="bar bar-result">
  <i class="grip"></i>
  <label for="rscale">Result</label>
  <span class="combo"><select id="rscale"><option>2.1e+002 (Auto Scale)</option></select></span>
  <button class="drop" aria-label="Geometry"><svg class="ic"><use href="#solid"/></svg></button>
  <button class="drop" aria-label="Contours"><svg class="ic"><use href="#strip"/></svg></button>
  <button class="drop" aria-label="Edges"><svg class="ic"><use href="#rcube"/></svg></button>
  <button aria-label="Vectors"><svg class="ic"><use href="#vecs"/></svg></button><i class="sep"></i>
  <button aria-label="Maximum"><svg class="ic"><use href="#max"/></svg></button>
  <button aria-label="Minimum"><svg class="ic"><use href="#min"/></svg></button><i class="sep"></i>
  <button><svg class="ic"><use href="#probe"/></svg>Probe</button><i class="sep"></i>
  <label for="disp">Display</label>
  <span class="combo"><select id="disp"><option>Scoped Bodies</option></select></span>
</nav>

<main class="work">
  <div class="left">
    <section class="outline">
      <h2 class="phead">Outline<svg class="pin"><use href="#pin"/></svg></h2>
      <div class="filter">
        <i class="grip"></i><label for="filt">Filter:</label>
        <span class="combo"><select id="filt"><option>Name</option></select></span>
        <input type="text" aria-label="Filter text">
      </div>
      <div class="treebar">
        <i class="grip"></i>
        <button aria-label="Refresh"><svg class="ic"><use href="#refresh"/></svg></button>
        <button aria-label="Clear"><svg class="ic"><use href="#erase"/></svg></button>
        <button aria-label="Filter tree"><svg class="ic"><use href="#gate"/></svg></button>
        <button aria-label="Expand all"><svg class="ic"><use href="#plusbox"/></svg></button>
        <button aria-label="Collapse folders"><svg class="ic"><use href="#fold"/></svg></button>
        <button aria-label="Sort"><svg class="ic"><use href="#az"/></svg></button>
      </div>
      <ul class="tree">
        <li class="l0"><svg class="ic"><use href="#proj"/></svg><b>Project</b></li>
        <li class="l1"><i class="box minus"></i><i class="dots"></i><svg class="ic"><use href="#model"/></svg><b>Model (A4)</b></li>
        <li class="l2"><i class="box plus"></i><i class="dots"></i><svg class="ok"><use href="#check"/></svg><svg class="ic"><use href="#geom"/></svg>Geometry</li>
        <li class="l2"><i class="box plus"></i><i class="dots"></i><svg class="ok"><use href="#check"/></svg><svg class="ic"><use href="#mat"/></svg>Materials</li>
        <li class="l2"><i class="box plus"></i><i class="dots"></i><svg class="ok"><use href="#check"/></svg><svg class="ic"><use href="#triad"/></svg>Coordinate Systems</li>
        <li class="l2"><i class="box line"></i><i class="dots"></i><svg class="ok"><use href="#check"/></svg><svg class="ic"><use href="#mesh"/></svg>Mesh</li>
        <li class="l2"><i class="box minus"></i><i class="dots"></i><svg class="ok"><use href="#check"/></svg><svg class="ic"><use href="#statics"/></svg><b>Static Structural (A5)</b></li>
        <li class="l3"><i class="box line"></i><i class="dots"></i><svg class="ok"><use href="#check"/></svg><svg class="ic"><use href="#aset"/></svg>Analysis Settings</li>
        <li class="l3"><i class="box line"></i><i class="dots"></i><svg class="ok"><use href="#check"/></svg><svg class="ic"><use href="#force"/></svg>Force</li>
        <li class="l3"><i class="box line"></i><i class="dots"></i><svg class="ok"><use href="#check"/></svg><svg class="ic"><use href="#fixed"/></svg>Fixed Support</li>
        <li class="l3"><i class="box minus"></i><i class="dots"></i><svg class="ok"><use href="#check"/></svg><svg class="ic"><use href="#soln"/></svg><b>Solution (A6)</b></li>
        <li class="l4"><i class="box line"></i><i class="dots"></i><svg class="ok"><use href="#check"/></svg><svg class="ic"><use href="#sinfo"/></svg>Solution Information</li>
        <li class="l4"><i class="box line"></i><i class="dots"></i><svg class="ok"><use href="#check"/></svg><svg class="ic"><use href="#result"/></svg><span class="sel">Equivalent Stress</span></li>
        <li class="l4"><i class="box line last"></i><i class="dots"></i><svg class="ok"><use href="#check"/></svg><svg class="ic"><use href="#result"/></svg>Directional Deformation</li>
      </ul>
    </section>

    <section class="details">
      <h2 class="phead">Details of "Equivalent Stress"<svg class="pin"><use href="#pin"/></svg></h2>
      <div class="dbody">
        <table>
          <colgroup><col class="c-fold"><col class="c-name"><col></colgroup>
          <tr><td class="f"><i class="box minus"></i></td><th colspan="2">Scope</th></tr>
          <tr><td class="f"></td><td>Scoping Method</td><td class="ro">Geometry Selection</td></tr>
          <tr><td class="f"></td><td>Geometry</td><td class="ro">All Bodies</td></tr>
          <tr><td class="f"><i class="box minus"></i></td><th colspan="2">Definition</th></tr>
          <tr><td class="f"></td><td>Type</td><td>Equivalent (von-Mises) Stress</td></tr>
          <tr><td class="f"></td><td>By</td><td>Time</td></tr>
          <tr><td class="f"></td><td><label><input type="checkbox">Display Time</label></td><td>Last</td></tr>
          <tr><td class="f"></td><td>Calculate Time History</td><td>Yes</td></tr>
          <tr><td class="f"></td><td>Identifier</td><td class="ro"></td></tr>
          <tr><td class="f"></td><td>Suppressed</td><td>No</td></tr>
          <tr><td class="f"><i class="box minus"></i></td><th colspan="2">Integration Point Results</th></tr>
          <tr><td class="f"></td><td>Display Option</td><td>Averaged</td></tr>
          <tr><td class="f"></td><td>Average Across Bodies</td><td>No</td></tr>
          <tr><td class="f"><i class="box minus"></i></td><th colspan="2">Results</th></tr>
          <tr><td class="f"></td><td><input type="checkbox" aria-label="Minimum"></td><td class="ro"></td></tr>
        </table>
        <div class="vscroll"><button aria-label="Scroll up"><svg><use href="#chu"/></svg></button><i></i><button aria-label="Scroll down"><svg><use href="#chd"/></svg></button></div>
      </div>
    </section>
  </div>

  <div class="right">
    <section class="viewport">
      <div class="canvas">
        <svg class="scene" viewBox="274 142 1003 394" role="img" aria-label="Stress contour on airfoil section">
          <defs>
            <path id="foil" d="M415 385C415 376 420 365 428 355C443 337 470 320 502 304C530 292 560 283 590 278.500C620 273.500 650 272.500 680 272.500C730 273 780 276 820 279.500C880 285 950 293 1010 301C1060 307.500 1110 316 1150 323C1175 327 1190 333 1199 338L1212 345.500C1195 342 1180 337 1160 332C1120 326 1060 321.500 1010 321C960 321 910 324 860 329.500C800 337 720 350 660 361.500C600 374 560 382 520 390C490 396 460 398 440 398C422 398 415 396 415 385Z"/>
            <clipPath id="foilclip"><use href="#foil"/></clipPath>
            <radialGradient id="heat" gradientUnits="userSpaceOnUse" cx="426" cy="386" r="110"><stop offset=".09" stop-color="#d8a000"/><stop offset=".12" stop-color="#88b800"/><stop offset=".2" stop-color="#30b420"/><stop offset=".28" stop-color="#20b880"/><stop offset=".5" stop-color="#20b0a0"/><stop offset=".62" stop-color="#2090b8"/><stop offset="1" stop-color="#2090c0"/></radialGradient>
            <linearGradient id="tail" gradientUnits="userSpaceOnUse" x1="1095" x2="1185" y1="0" y2="0"><stop offset="0" stop-opacity="0"/><stop offset="1"/></linearGradient>
            <linearGradient id="axr" x2="0" y2="1"><stop offset="0" stop-color="#f02020"/><stop offset="1" stop-color="#900"/></linearGradient>
            <radialGradient id="cy" cx=".4" cy=".35" r=".7"><stop offset="0" stop-color="#40f0f0"/><stop offset="1" stop-color="#009098"/></radialGradient>
          </defs>
          <g clip-path="url(#foilclip)">
            <path d="M410 265h810v140H410z" fill="#0000b0"/>
            <path d="M410 265h122L502 304Q486 324 472 340Q460 355 460 371Q495 377 545 386L520 400H410z" fill="url(#heat)"/>
            <path d="M850 282Q1000 299 1130 320L1115 322Q1000 306 930 296Z" fill="#2098b8"/>
            <path d="M865 329Q930 318 1010 318T1120 325L1130 328Q1000 319 865 330Z" fill="#2098b8"/>
            <path id="meshlines" fill="none" stroke="#000" stroke-width=".7"/>
            <path d="M1080 290h140v70h-140z" fill="url(#tail)"/>
          </g>
          <use href="#foil" fill="none" stroke="#000"/>
          <circle cx="426" cy="386" r="10.500" fill="#fff" stroke="#000"/>
          <g class="rule">
            <path d="M622.500 502.500h307v7h-307z" fill="#fff" stroke="#000"/>
            <path d="M622.500 502h77v8h-77zM776 502h77v8h-77z"/>
            <text x="622" y="499" text-anchor="middle">0.00</text>
            <text x="776" y="499" text-anchor="middle">35.00</text>
            <text x="919" y="499">70.00 (mm)</text>
            <text x="699" y="521" text-anchor="middle">17.50</text>
            <text x="853" y="521" text-anchor="middle">52.50</text>
          </g>
          <path d="M1205 470V430" stroke="#0a8a14" stroke-width="3"/><path d="M1205 418l5 12h-10z" fill="#0a8a14"/>
          <path d="M1205 469.500h42v3h-42z" fill="#c01010"/><path d="M1246 465.500l12 5.500-12 5z" fill="url(#axr)"/>
          <path d="M1206 464h4l-3 4" fill="none" stroke="#22c"/>
          <circle cx="1205" cy="471" r="5" fill="#0808b0"/><circle cx="1230" cy="446" r="5.500" fill="url(#cy)"/>
          <text class="ax-y" x="1205" y="409">Y</text><text class="ax-x" x="1266" y="471">X</text>
        </svg>
        <div class="info"><b>A: Static Structural</b><span>Equivalent Stress</span><span>Type: Equivalent (von-Mises) Stress</span><span>Unit: MPa</span><span>Time: 1</span><span>31-07-2021 15:30</span></div>
        <div class="legend">
          <div class="bands"><i class="b1"></i><i class="b2"></i><i class="b3"></i><i class="b4"></i><i class="b5"></i><i class="b6"></i><i class="b7"></i><i class="b8"></i><i class="b9"></i></div>
          <div class="vals"><b>5.4907 Max</b><span>4.8807</span><span>4.2706</span><span>3.6605</span><span>3.0504</span><span>2.4403</span><span>1.8302</span><span>1.2202</span><span>0.61008</span><b>3.6563e-7 Min</b></div>
        </div>
        <div class="brand"><strong>ANSYS</strong><span>R19.2</span></div>
      </div>
      <div class="vtabs"><button class="act">Geometry</button><button>Print Preview</button><button>Report Preview</button></div>
    </section>

    <div class="bottom">
      <section class="graph">
        <h2 class="phead">Graph<svg class="pin"><use href="#pin"/></svg></h2>
        <div class="anim">
          <i class="grip"></i><span>Animation</span>
          <button aria-label="First frame"><svg class="ic"><use href="#tstart"/></svg></button>
          <button aria-label="Play"><svg class="ic"><use href="#tplay"/></svg></button>
          <button class="on" aria-label="Stop"><svg class="ic"><use href="#tstop"/></svg></button>
          <button aria-label="Last frame"><svg class="ic"><use href="#tend"/></svg></button><i class="sep"></i>
          <button class="on" aria-label="Distributed"><svg class="ic"><use href="#dist1"/></svg></button>
          <button aria-label="Result sets"><svg class="ic"><use href="#dist2"/></svg></button><i class="sep"></i>
          <span class="combo"><select aria-label="Frames"><option>20 Frames</option></select></span>
          <span class="combo"><select aria-label="Duration"><option>2 Sec (Auto)</option></select></span><i class="sep"></i>
          <button aria-label="Export video"><svg class="ic"><use href="#save"/></svg></button><i class="sep"></i>
          <button aria-label="Zoom to range"><svg class="ic"><use href="#zplay"/></svg></button>
          <button aria-label="Contour bars"><svg class="ic"><use href="#bars"/></svg></button><i class="sep"></i>
          <button aria-label="Cycles"><svg class="ic"><use href="#cyc"/></svg></button>
          <span class="muted">3 Cycles</span>
        </div>
        <div class="plot"><div class="track"></div><div class="range"></div></div>
        <div class="gtabs">
          <button class="t-msg"><svg viewBox="0 0 64 17" preserveAspectRatio="none"><path d="M1 0Q6 3 10 9T20 16H60Q65 15 62 11L53 0" fill="#fff" stroke="#999"/></svg><span>Messages</span></button>
          <button class="t-graph"><svg viewBox="0 0 56 17" preserveAspectRatio="none"><path d="M1 0Q6 3 10 9T20 16H51Q55 16 55 12V0" fill="#fff" stroke="#999"/></svg><span>Graph</span></button>
        </div>
      </section>
      <section class="tabular">
        <h2 class="phead">Tabular Data<svg class="pin"><use href="#pin"/></svg></h2>
        <div class="tscroll">
          <table>
            <colgroup><col class="k0"><col class="k1"><col class="k2"><col class="k3"><col class="k4"></colgroup>
            <tr><th></th><th>Time [s]</th><th class="red"><label><input type="checkbox" checked>Minimum [MPa]</label></th><th class="green"><label><input type="checkbox" checked>Maximum [MPa]</label></th><th class="blue"><label><input type="checkbox" checked>Average [MPa]</label></th></tr>
            <tr><th>1</th><td>1.</td><td>3.6563e-007</td><td>5.4907</td><td>0.53518</td></tr>
          </table>
        </div>
        <div class="hscroll"><button aria-label="Scroll left"><svg><use href="#chl"/></svg></button><i></i><button aria-label="Scroll right"><svg><use href="#chr"/></svg></button></div>
      </section>
    </div>
  </div>
</main>

<footer class="status">
  <span></span><span></span><span><svg class="ic"><use href="#msg"/></svg>No Messages</span><span>No Selection</span>
  <span class="units"><em>Metric (mm, kg, N, s, mV, mA)</em><em>Degrees</em><em>rad/s</em><em>Celsius</em></span>
  <svg class="sizer" viewBox="0 0 12 12"><path d="M1 12L12 1M5 12l7-7M9 12l3-3" stroke="#999"/></svg>
</footer>

<div class="taskbar">
  <button class="start" aria-label="Start"><svg><use href="#winlogo"/></svg></button>
  <label class="find"><svg><use href="#search"/></svg><input type="text" placeholder="Type here to search" aria-label="Search"></label>
  <div class="apps">
    <button aria-label="Cortana"><svg><use href="#cortana"/></svg></button>
    <button aria-label="Task view"><svg><use href="#tview"/></svg></button>
    <button class="run" aria-label="File Explorer"><svg><use href="#files"/></svg></button>
    <button aria-label="Store"><svg><use href="#store"/></svg></button>
    <button aria-label="App"><svg><use href="#sbolt"/></svg></button>
    <button class="run" aria-label="Chrome"><svg><use href="#chrome"/></svg></button>
    <button aria-label="Edge"><svg><use href="#edge"/></svg></button>
    <button class="run" aria-label="Movies"><svg><use href="#movies"/></svg></button>
    <button class="run" aria-label="X5"><svg><use href="#x5"/></svg></button>
    <button class="run" aria-label="Calculator"><svg><use href="#calc"/></svg></button>
    <button class="run" aria-label="ANSYS"><svg><use href="#ansysl"/></svg></button>
    <button class="run cur" aria-label="Mechanical"><svg><use href="#m-logo"/></svg></button>
  </div>
  <div class="tray">
    <svg class="big"><use href="#help"/></svg><svg class="big"><use href="#cloud"/></svg><span class="temp">29°C</span>
    <svg><use href="#up"/></svg><svg><use href="#cam"/></svg><svg><use href="#mic"/></svg><svg><use href="#batt"/></svg><svg><use href="#vol"/></svg><svg><use href="#wifi"/></svg>
    <span>ENG</span><time><span>15:31</span><span>31-07-2021</span></time><svg><use href="#note"/></svg>
  </div>
</div>
<script src="mesh.js"></script>
</body>
</html>
```

FILE: styles.css
```css
* { box-sizing: border-box; }
:root { --face: #f0f0f0; --line: #a8a8a8; --ui: "Noto Sans", "Open Sans", sans-serif; --ui-alt: "Open Sans", "Noto Sans", sans-serif; }
body { margin: 0; height: 100vh; display: flex; flex-direction: column; overflow: hidden; background: var(--face); color: #1a1a1a; font: 9px/13px var(--ui); }
button, select, input { font: inherit; color: inherit; margin: 0; padding: 0; border: 0; background: none; border-radius: 0; }
button { display: flex; align-items: center; gap: 1px; white-space: nowrap; }
h1, h2 { margin: 0; font-weight: 400; }
.sprite { position: absolute; width: 0; height: 0; }
.ic { width: 14px; height: 14px; flex: none; }
.ic.sm { width: 12px; height: 12px; }

.titlebar { flex: none; height: 20px; display: flex; align-items: center; gap: 3px; padding: 0 2px 0 1px; background: #fff; }
.titlebar h1 { font-size: 9px; line-height: 18px; }
.winbtns { display: flex; margin-left: auto; }
.winbtns button { width: 39px; justify-content: center; }
.winbtns svg { width: 10px; height: 10px; }

.bar { flex: none; display: grid; align-items: center; justify-content: start; height: 20px; padding-left: 3px; border-bottom: 1px solid var(--line); white-space: nowrap; }
.bar > * { min-width: 0; }
.bar-menu { grid-template-columns: 9px 24px 26px 30px 32px 31px 29px 5px 8px 22px 22px 23px 8px 60px 94px 76px 22px 22px 23px 22px 30px 74px 22px 22px; }
.bar-view { grid-template-columns: 7px 22px 23px 27px 26px 22px 23px 22px 23px 22px 23px 22px 6px 30px 6px 24px 23px 22px 22px 7px 23px 22px 23px 22px 23px 22px 23px 22px 8px 28px; }
.bar-vertex { grid-template-columns: 9px 86px 86px 126px 72px 7px 77px 24px 62px 75px 8px 23px 22px 23px 22px 22px; }
.bar-size { grid-template-columns: 9px 50px 71px 69px 95px 71px 5px 8px 76px 50px; }
.bar-explode { grid-template-columns: 8px 22px 49px 80px 123px 120px 5px 8px 96px 30px 30px 30px 30px 30px 21px 24px 60px; }
.bar-result { grid-template-columns: 4px 35px 118px 30px 30px 30px 23px 6px 23px 23px 6px 51px 8px 43px 97px; border-bottom-color: var(--face); }
.grip { width: 2px; height: 14px; border-left: 1px solid #fff; border-right: 1px solid #999; }
.sep { width: 1px; height: 14px; background: #aaa; }
button:disabled, .muted { color: #999; }
.drop::after, .combo::after { content: ""; flex: none; margin-left: auto; margin-right: 5px; border: 3px solid transparent; border-top: 4px solid #111; border-bottom: 0; }
.dim::after, .off::after { border-top-color: #999; }
.on { width: 20px; height: 17px; padding: 0 2px; background: #f8f8f8; border: 1px solid #999; border-right-color: #fff; border-bottom-color: #fff; }
.combo { display: flex; align-items: center; height: 15px; margin-right: 5px; background: #fff; }
.combo.off { background: #f4f4f4; color: #888; }
.combo select { appearance: none; flex: 1; min-width: 0; padding-left: 3px; opacity: 1; }
.combo::after { margin-right: 2px; }
input[type=range] { appearance: none; width: 112px; height: 12px; }
input[type=range]::-webkit-slider-runnable-track { height: 2px; background: #999; }
input[type=range]::-webkit-slider-thumb { appearance: none; width: 3px; height: 9px; margin-top: -2px; background: #ddd; border: 1px solid #888; }

.work { flex: 1; min-height: 0; display: grid; grid-template-columns: 268px 1fr; gap: 5px; padding: 1px 2px 0 0; }
.left, .right { min-width: 0; min-height: 0; display: flex; flex-direction: column; }
.left { gap: 4px; }
.phead { flex: none; display: flex; align-items: center; justify-content: space-between; height: 17px; padding: 0 3px 0 4px; background: linear-gradient(90deg, #bccbdc, #d4e3f2); border-bottom: 1px solid #888; font-size: 9px; line-height: 16px; }
.pin { width: 9px; height: 9px; }
.outline { flex: 1; min-height: 0; display: flex; flex-direction: column; background: #fff; border-left: 1px solid #888; border-bottom: 1px solid #aaa; }
.outline .phead { border-bottom-width: 2px; border-bottom-color: #777; }
.filter { display: grid; grid-template-columns: 6px 34px 84px 119px; align-items: center; height: 21px; padding-left: 2px; background: var(--face); border-bottom: 1px solid var(--line); }
.filter .combo { height: 15px; margin: 0 4px 0 0; }
.filter .combo select { padding-left: 0; }
.filter input { height: 15px; background: #fff; }
.treebar { display: grid; grid-template-columns: 8px repeat(6, 20px); align-items: center; height: 20px; padding-left: 2px; background: var(--face); }
.tree { list-style: none; margin: 0; padding: 0; }
.tree li { display: flex; align-items: center; height: 13px; white-space: nowrap; }
.tree li:nth-child(3n) { height: 14px; }
.tree .ic { width: 13px; height: 13px; margin-right: 4px; }
.tree b { font-weight: 700; }
.l0, .l1 { padding-left: 7px; }
.l2 { padding-left: 29px; }
.l3 { padding-left: 52px; }
.l4 { padding-left: 74px; }
.box { flex: none; display: block; width: 8px; height: 8px; border: 1px solid #888; background: linear-gradient(#111, #111) center / 4px 1px no-repeat, #fff; }
.box.plus { background: linear-gradient(#111, #111) center / 4px 1px no-repeat, linear-gradient(#111, #111) center / 1px 4px no-repeat, #fff; }
.box.line { align-self: stretch; height: auto; width: 4px; margin-left: 4px; border: 0; border-left: 1px dotted #888; background: none; }
.box.last { margin-bottom: 6px; }
.dots { flex: none; width: 9px; border-top: 1px dotted #888; }
.l1 .dots { margin-right: 6px; }
.ok { width: 6px; height: 9px; align-self: flex-end; flex: none; }
.sel { background: #ececec; }

.details { flex: none; display: flex; flex-direction: column; height: 231px; margin-bottom: 3px; border-left: 1px solid #888; background: #fff; }
.dbody { flex: 1; min-height: 0; display: flex; overflow: hidden; border-bottom: 1px solid #999; }
.details table { flex: 1; align-self: flex-start; border-collapse: collapse; table-layout: fixed; }
.c-fold { width: 12px; }
.c-name { width: 101px; }
.details tr { height: 15px; }
.details td, .details th { height: 15px; padding: 0 2px; border: 1px solid #b0b0b0; font-size: 9px; line-height: 13px; text-align: left; white-space: nowrap; }
.details td { font-family: var(--ui-alt); }
.details .f { border-top: 0; border-bottom: 0; border-left: 0; background: #f8f8f8; }
.details .ro { background: #e8e6e4; }
.details label { display: flex; align-items: center; gap: 4px; }
.details input { appearance: none; width: 9px; height: 9px; border: 1px solid #bbb; background: #fff; }
.vscroll { width: 14px; display: flex; flex-direction: column; background: #f0f0f0; }
.vscroll button { height: 14px; justify-content: center; }
.vscroll i { height: 129px; margin: 0 1px; background: #cdcdcd; }
.vscroll button:last-child { margin-top: auto; }
.vscroll svg, .hscroll svg { width: 8px; height: 8px; }

.viewport { flex: 1; min-height: 0; display: flex; flex-direction: column; border: 1px solid #555; border-top-color: #888; }
.canvas { flex: 1; min-height: 0; position: relative; background: linear-gradient(#6e8ee0 0%, #9fb3ea 38%, #d0daf5 68%, #fafbff 100%); }
.scene { position: absolute; inset: 0; width: 100%; height: 100%; }
.scene text { font: 9px var(--ui); }
.scene .ax-y { fill: #2ea84a; }
.scene .ax-x { fill: #e83a4a; }
.info { position: absolute; left: 13px; top: 13px; height: 80px; display: flex; flex-direction: column; justify-content: space-between; line-height: 13px; }
.legend { position: absolute; left: 13px; top: 106px; display: flex; gap: 8px; height: 147px; }
.bands { display: grid; width: 14px; margin: 6px 0; border: 1px solid #111; }
.bands i + i { border-top: 1px solid #111; }
.b1 { background: #f00; } .b2 { background: #ffb000; } .b3 { background: #ff0; } .b4 { background: #b0ff00; } .b5 { background: #0f0; }
.b6 { background: #00ffb0; } .b7 { background: #0ff; } .b8 { background: #00b0ff; } .b9 { background: #00f; }
.vals { display: flex; flex-direction: column; justify-content: space-between; }
.brand { position: absolute; right: 18px; top: 18px; display: flex; flex-direction: column; align-items: flex-end; color: #fff; }
.brand strong { font-size: 22px; line-height: 24px; }
.brand span { font-size: 13px; line-height: 14px; }
.vtabs { flex: none; display: flex; height: 14px; border-top: 1px solid #333; background: #f0f0f0; padding-left: 3px; }
.vtabs button { position: relative; height: 13px; padding: 0 5px; }
.vtabs button::after { content: ""; position: absolute; right: -1px; top: 0; height: 13px; width: 1px; background: #222; transform: rotate(25deg); }
.vtabs .act { font-weight: 700; background: #fff; }

.bottom { flex: none; display: grid; grid-template-columns: 1fr 292px; gap: 3px; height: 109px; margin: 5px 0 3px; }
.graph, .tabular { min-width: 0; display: flex; flex-direction: column; }
.anim { display: grid; grid-template-columns: 5px 53px 20px 18px 22px 19px 5px 21px 21px 9px 120px 118px 6px 20px 7px 20px 20px 7px 23px 50px; align-items: center; height: 22px; padding-left: 3px; border-left: 1px solid #888; white-space: nowrap; }
.anim .combo { margin-right: 9px; }
.plot { flex: 1; display: flex; flex-direction: column; gap: 9px; padding: 15px 22px 0 43px; background: #fff; border-left: 1px solid #888; border-bottom: 1px solid #ddd; }
.track { height: 4px; border: 1px solid #333; }
.range { height: 12px; border: 1px solid #aaa; }
.gtabs { flex: none; display: flex; height: 17px; padding-left: 3px; }
.gtabs button { position: relative; height: 17px; }
.gtabs svg { position: absolute; inset: 0; width: 100%; height: 100%; }
.gtabs span { position: relative; }
.t-msg { width: 66px; padding-left: 17px; }
.t-graph { width: 52px; margin-left: -12px; padding-left: 17px; font-weight: 700; }
.tabular { border-left: 1px solid #888; }
.tscroll { flex: 1; min-height: 0; overflow: hidden; background: #a0a0a0; }
.tabular table { width: 354px; border-collapse: collapse; table-layout: fixed; }
.k0 { width: 12px; } .k1 { width: 43px; } .k2 { width: 97px; } .k3 { width: 99px; } .k4 { width: 103px; }
.tabular th, .tabular td { height: 14px; padding: 0 2px; border: 1px solid #b0b0b0; background: #e8e6e2; font-weight: 400; line-height: 12px; text-align: left; white-space: nowrap; }
.tabular th { background: #f2f2f2; }
.tabular label { display: flex; align-items: center; gap: 4px; }
.tabular input { appearance: none; width: 11px; height: 11px; border: 1px solid #888; border-right-color: #ddd; border-bottom-color: #ddd; background: #fff; }
.tabular input::before { content: ""; display: block; width: 3px; height: 6px; margin: 0 0 0 3px; border: solid #000; border-width: 0 2px 2px 0; transform: rotate(40deg); }
.red { color: #d01c30; } .green { color: #1c9030; } .blue { color: #2a2ad0; }
.hscroll { flex: none; display: flex; height: 14px; background: #f0f0f0; }
.hscroll button { width: 14px; justify-content: center; }
.hscroll i { width: 224px; margin: 1px 0; background: #cdcdcd; }
.hscroll button:last-child { margin-left: auto; }

.status { flex: none; display: grid; grid-template-columns: 344px 163px 138px 1fr 291px 24px; gap: 3px; height: 19px; padding-bottom: 1px; background: #f0f0f0; border-top: 1px solid #fff; font-family: var(--ui-alt); }
.status > span { display: flex; align-items: center; gap: 3px; border-left: 1px solid #999; border-top: 1px solid #999; padding-left: 1px; white-space: nowrap; font-size: 10px; }
.status em { font-style: normal; }
.status .units { gap: 10px; }
.sizer { width: 12px; height: 12px; place-self: end; }

.taskbar { flex: none; display: flex; height: 33px; background: #1e1e20; color: #fff; font-family: var(--ui-alt); }
.start { width: 40px; justify-content: center; }
.start svg { width: 14px; height: 14px; }
.find { width: 286px; display: flex; align-items: center; gap: 9px; padding-left: 10px; background: #f2f2f2; color: #222; }
.find svg { width: 14px; height: 14px; }
.find input { font-size: 12px; flex: 1; }
.find input::placeholder { color: #333; opacity: 1; }
.apps { display: grid; grid-template-columns: repeat(12, 1fr); width: 496px; }
.apps button { justify-content: center; position: relative; }
.apps svg { width: 20px; height: 20px; }
.run::after { content: ""; position: absolute; left: 3px; right: 3px; bottom: 0; height: 2px; background: #76b9ed; }
.cur { background: #4a4a4c; }
.cur::after { left: 0; right: 0; }
.tray { margin-left: auto; padding-right: 11px; display: grid; grid-template-columns: 54px 28px 38px repeat(6, 20px) 30px 60px 34px; align-items: center; justify-items: center; font-size: 10px; }
.tray svg { width: 14px; height: 14px; }
.tray .big { width: 20px; height: 20px; }
.tray .temp { font-size: 11px; }
.tray time { display: grid; justify-items: center; line-height: 15px; }
```

FILE: mesh.js
```js
// Builds the triangulated element edges drawn over the airfoil contour.
(function () {
  var seed = 7;
  function rnd() {
    seed = (seed * 16807) % 2147483647;
    return seed / 2147483647 - 0.5;
  }
  var step = 4.4, rise = 3.8, x0 = 405, y0 = 262, cols = 187, rows = 38, pts = [], d = [];
  for (var r = 0; r < rows; r++) {
    pts.push([]);
    for (var c = 0; c < cols; c++) {
      pts[r].push((x0 + c * step + (r % 2) * step / 2 + rnd() * 2).toFixed(1) + " " + (y0 + r * rise + rnd() * 2).toFixed(1));
    }
  }
  for (r = 0; r < rows; r++) {
    d.push("M" + pts[r].join("L"));
    if (r + 1 < rows) {
      var zig = [];
      for (c = 0; c < cols; c++) {
        if (r % 2) zig.push(pts[r + 1][c], pts[r][c]);
        else zig.push(pts[r][c], pts[r + 1][c]);
      }
      d.push("M" + zig.join("L"));
    }
  }
  document.getElementById("meshlines").setAttribute("d", d.join(""));
})();
```
